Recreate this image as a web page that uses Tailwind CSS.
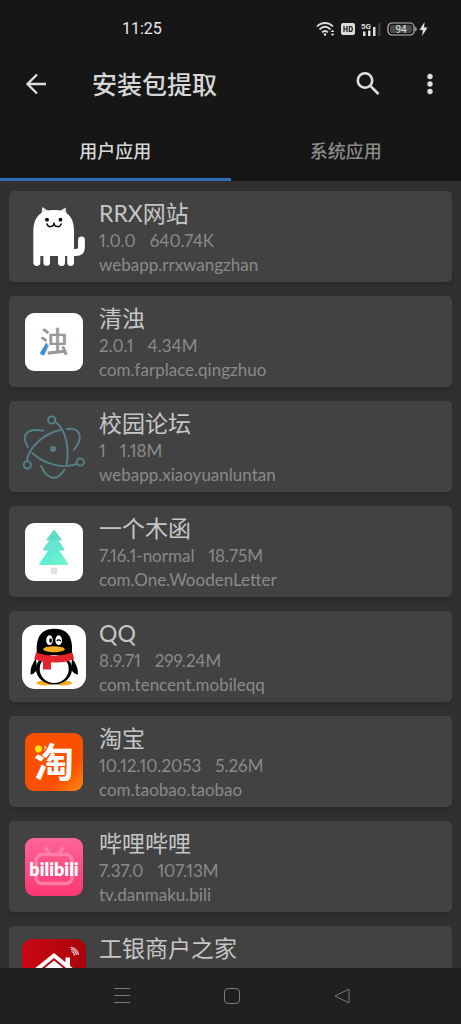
<!DOCTYPE html>
<html lang="zh-CN">
<head>
    <meta charset="UTF-8" />
    <meta name="viewport" content="width=device-width, initial-scale=1.0" />
    <title>安装包提取</title>
    <script src="https://cdn.jsdelivr.net/npm/@tailwindcss/browser@4"></script>
</head>
<body class="h-screen flex flex-col overflow-hidden bg-[#303030] font-['Lato','Noto_Sans_CJK_SC',sans-serif]">

    <header class="shrink-0 bg-[#161616] text-[#d6d6d6]">
        <!-- Status bar -->
        <div class="flex items-center justify-between h-14 pl-[122px] pr-[33px] pt-[2px]">
            <span class="font-['Roboto',sans-serif] text-base text-[#e8e8e8]">11:25</span>
            <div class="flex items-center gap-[6px]">
                <svg class="w-[19px] h-4" viewBox="0 0 19 16" fill="none" stroke="#dcdcdc" stroke-width="1.8">
                    <path d="M1 5.500 C5.500 0.800 12.500 0.800 17 5.500" />
                    <path d="M3.500 8.500 C7 5 11 5 14.500 8.500" />
                    <path d="M6 11.300 C8 9.500 10 9.500 12 11.300" />
                    <circle cx="9" cy="13.500" r="1.300" fill="#dcdcdc" stroke="none" />
                    <path d="M14.500 11 L16.500 8.800 L18.500 11 Z M14.500 12.800 L16.500 15 L18.500 12.800 Z" fill="#dcdcdc" stroke="none" />
                </svg>
                <svg class="w-[14px] h-3" viewBox="0 0 14 12">
                    <rect width="14" height="12" rx="2" fill="#dcdcdc" />
                    <path d="M3 3 V9 M6 3 V9 M3 6 H6 M8.300 3.500 V8.500 H9.500 Q11.300 8.500 11.300 6 Q11.300 3.500 9.500 3.500 Z" fill="none" stroke="#161616" stroke-width="1.200" />
                </svg>
                <svg class="w-5 h-4" viewBox="0 0 20 16" fill="#dcdcdc">
                    <text x="0" y="8" font-family="Roboto" font-size="8" font-weight="700">5G</text>
                    <rect x="2" y="10.500" width="2.500" height="4.500" />
                    <rect x="7" y="9.500" width="2.500" height="5.500" />
                    <rect x="12" y="6" width="2.500" height="9" />
                    <rect x="17" y="2" width="2.500" height="13" fill="#3a3a3a" />
                </svg>
                <svg class="w-[30px] h-[14px]" viewBox="0 0 30 14">
                    <rect x="1" y="1" width="26" height="12" rx="4" fill="#161616" stroke="#bdbdbd" stroke-width="1.200" />
                    <rect x="3" y="3" width="22" height="8" rx="2" fill="#484848" />
                    <path d="M28.500 5 Q29.500 7 28.500 9" fill="none" stroke="#bdbdbd" stroke-width="1.200" />
                    <text x="14" y="10.500" text-anchor="middle" font-family="Roboto" font-size="10" fill="#e0e0e0">94</text>
                </svg>
                <svg class="w-[9px] h-[14px] -ml-1" viewBox="0 0 8 14" fill="#e0e0e0">
                    <path d="M5 0 L0 8 H3.300 L2.700 14 L8 5.500 H4.600 Z" />
                </svg>
            </div>
        </div>

        <!-- App bar -->
        <div class="flex items-center h-14 pl-6 pr-[19px]">
            <button class="w-6 h-6" aria-label="返回">
                <svg viewBox="0 0 24 24" fill="none" stroke="#dedede" stroke-width="2.300">
                    <path d="M22 12 H3.500 M13 2.500 L3.500 12 L13 21.500" />
                </svg>
            </button>
            <h1 class="flex-1 pl-11 text-[25px] font-medium leading-8">安装包提取</h1>
            <button class="w-6 h-6 mr-[38px]" aria-label="搜索">
                <svg viewBox="0 0 24 24" fill="none" stroke="#dedede" stroke-width="2.600">
                    <circle cx="9" cy="8.500" r="7.200" />
                    <path d="M14.300 13.800 L22.500 22" />
                </svg>
            </button>
            <button class="w-6 h-6" aria-label="更多">
                <svg viewBox="0 0 24 24" fill="#dedede">
                    <circle cx="12" cy="4.500" r="2.700" />
                    <circle cx="12" cy="12" r="2.700" />
                    <circle cx="12" cy="19.500" r="2.700" />
                </svg>
            </button>
        </div>

        <!-- Tabs -->
        <nav class="grid grid-cols-2 pt-3 text-lg font-medium">
            <button class="h-[57px] border-b-3 border-[#2f6db4]">用户应用</button>
            <button class="h-[57px] border-b-3 border-transparent text-[#8a8a8a]">系统应用</button>
        </nav>
    </header>

    <!-- App list -->
    <main class="flex-1 min-h-0 overflow-hidden px-[9px] pt-[10px]">
        <ul class="flex flex-col gap-[14px] text-[17px] leading-6 text-[#8a8a8a] proportional-nums">
            <li class="flex items-center h-[91px] shrink-0 pl-[13px] gap-[13px] rounded-[5px] bg-[#424242] shadow-md">
                <svg class="w-16 h-16 shrink-0" viewBox="0 0 64 64">
                    <path d="M19 12 L20.300 2 L28 7 Z M45 12 L43.500 2.500 L36 7 Z" fill="#f0dfdf" />
                    <path d="M11.300 25 Q12 5 32 5 Q51.500 5 52 25 V57.500 A3.400 3.400 0 0 1 45.200 57.500 V51 H43 V57.500 A3.500 3.500 0 0 1 36 57.500 V51 H28 V57.500 A3.300 3.300 0 0 1 21.400 57.500 V51 H18.300 V57.500 A3.500 3.500 0 0 1 11.300 57.500 Z" fill="#fff" />
                    <path d="M51 47.500 H54 Q59.500 47.500 59.500 42 V35" fill="none" stroke="#fff" stroke-width="6.800" stroke-linecap="round" />
                    <circle cx="25" cy="14.700" r="1.900" />
                    <circle cx="38.500" cy="14.700" r="1.900" />
                    <path d="M25 19 Q26 22 28.500 21.600 Q32 21.300 32 17.500 Q32 21.300 35.500 21.600 Q38 22 39.200 19" fill="none" stroke="#111" stroke-width="1.500" stroke-linecap="round" />
                </svg>
                <div class="pt-px">
                    <h2 class="text-[23px] leading-8 text-[#c6c6c6]">RRX网站</h2>
                    <p class="flex gap-[14px]"><span>1.0.0</span><span>640.74K</span></p>
                    <p>webapp.rrxwangzhan</p>
                </div>
            </li>

            <li class="flex items-center h-[91px] shrink-0 pl-[13px] gap-[13px] rounded-[5px] bg-[#424242] shadow-md">
                <svg class="w-16 h-16 shrink-0" viewBox="0 0 64 64">
                    <rect x="3" y="3" width="58" height="58" rx="9" fill="#fff" />
                    <text x="32" y="43" text-anchor="middle" font-family="Noto Sans CJK SC" font-size="29" font-weight="500" fill="#999">浊</text>
                    <path d="M24.500 32 L18 43 Q19 46 22 45 L25.500 36 Z" fill="#3a90d8" />
                </svg>
                <div class="pt-px">
                    <h2 class="text-[23px] leading-8 text-[#c6c6c6]">清浊</h2>
                    <p class="flex gap-[14px]"><span>2.0.1</span><span>4.34M</span></p>
                    <p>com.farplace.qingzhuo</p>
                </div>
            </li>

            <li class="flex items-center h-[91px] shrink-0 pl-[13px] gap-[13px] rounded-[5px] bg-[#424242] shadow-md">
                <svg class="w-16 h-16 shrink-0" viewBox="0 0 64 64" fill="none" stroke="#568088" stroke-width="1.900" stroke-linecap="round">
                    <path d="M33 6.500 C42 13 48 29 44.700 49" />
                    <path d="M5 46 C6 34 20 19 38 15" />
                    <path d="M10.300 38 C20 47 38 55 55 49" />
                    <path d="M21.500 15.700 C6 13 -2 19 6 32" />
                    <path d="M45 14 C60 12 61 24 52 35" />
                    <path d="M19 51 C26 66 36 66 42.500 54.500" />
                    <circle cx="29.700" cy="5" r="3.600" />
                    <circle cx="5.300" cy="50" r="3.600" />
                    <circle cx="58.300" cy="47" r="3.600" />
                    <circle cx="31" cy="34" r="3" fill="#568088" stroke="none" />
                </svg>
                <div class="pt-px">
                    <h2 class="text-[23px] leading-8 text-[#c6c6c6]">校园论坛</h2>
                    <p class="flex gap-[14px]"><span>1</span><span>1.18M</span></p>
                    <p>webapp.xiaoyuanluntan</p>
                </div>
            </li>

            <li class="flex items-center h-[91px] shrink-0 pl-[13px] gap-[13px] rounded-[5px] bg-[#424242] shadow-md">
                <svg class="w-16 h-16 shrink-0" viewBox="0 0 64 64">
                    <defs>
                        <linearGradient id="leaf" x1="0" y1="0" x2="1" y2="1">
                            <stop offset="0" stop-color="#3fe6e0" />
                            <stop offset="1" stop-color="#7df5c4" />
                        </linearGradient>
                    </defs>
                    <rect x="3" y="3" width="58" height="58" rx="9" fill="#fff" />
                    <rect x="28.700" y="47.700" width="6.500" height="6.500" rx="1" fill="#e4e0de" />
                    <path d="M31 24 L17.300 43.500 Q17 45 18.500 45 H45 Q46.500 45 46 43.500 L33 24 Z" fill="url(#leaf)" />
                    <path d="M31 15 L21 29 Q21 30.500 22 30.500 H41.500 Q43 30.500 42.300 29 L33 15 Z" fill="#67e6cf" />
                    <path d="M31.200 10.500 L24.500 19.500 Q24.500 20.500 25.500 20.500 H39 Q40 20.500 39.600 19.500 L33 10.500 Q32 9.500 31.200 10.500 Z" fill="#5fdcc2" />
                </svg>
                <div class="pt-px">
                    <h2 class="text-[23px] leading-8 text-[#c6c6c6]">一个木函</h2>
                    <p class="flex gap-[14px]"><span>7.16.1-normal</span><span>18.75M</span></p>
                    <p>com.One.WoodenLetter</p>
                </div>
            </li>

            <li class="flex items-center h-[91px] shrink-0 pl-[13px] gap-[13px] rounded-[5px] bg-[#424242] shadow-md">
                <svg class="w-16 h-16 shrink-0" viewBox="0 0 64 64">
                    <rect width="64" height="64" rx="13" fill="#fff" />
                    <ellipse cx="23" cy="58" rx="8.500" ry="2.600" fill="#f5ae22" />
                    <ellipse cx="41.500" cy="58" rx="8.500" ry="2.600" fill="#f5ae22" />
                    <path d="M14 33 Q8 42 8.500 49 Q9.500 51 15 45 Z M50 33 Q56.500 42 56 49 Q55 51 49 45 Z" />
                    <ellipse cx="32" cy="44" rx="18" ry="15.500" />
                    <path d="M14.700 30 V21 Q16 3.700 32.300 3.700 Q49 3.700 50 21 V30 Z" />
                    <ellipse cx="32.200" cy="44" rx="14.500" ry="14" fill="#fff" />
                    <path d="M14 27.500 Q32 34 50.500 27.500 L52 34 Q42 38.500 29 37.300 V44.500 H21 V36.500 Q16 35.500 12.300 34 Z" fill="#e5232a" />
                    <ellipse cx="27.500" cy="15.200" rx="3.300" ry="4.900" fill="#fff" />
                    <ellipse cx="36.700" cy="15.200" rx="3.300" ry="4.900" fill="#fff" />
                    <ellipse cx="28.600" cy="15.500" rx="1.300" ry="2.200" />
                    <path d="M34.800 16 Q36.500 13.800 38.800 16" fill="none" stroke="#000" stroke-width="1.200" />
                    <ellipse cx="32" cy="24.200" rx="10.800" ry="3" fill="#f5ae22" />
                </svg>
                <div class="pt-px">
                    <h2 class="text-[23px] leading-8 text-[#c6c6c6]">QQ</h2>
                    <p class="flex gap-[14px]"><span>8.9.71</span><span>299.24M</span></p>
                    <p>com.tencent.mobileqq</p>
                </div>
            </li>

            <li class="flex items-center h-[91px] shrink-0 pl-[13px] gap-[13px] rounded-[5px] bg-[#424242] shadow-md">
                <svg class="w-16 h-16 shrink-0" viewBox="0 0 64 64">
                    <defs>
                        <linearGradient id="orange" x1="0" y1="0" x2="1" y2="1">
                            <stop offset="0.700" stop-color="#fb5000" />
                            <stop offset="1" stop-color="#ff8a10" />
                        </linearGradient>
                    </defs>
                    <rect x="3" y="3" width="58" height="58" rx="9" fill="url(#orange)" />
                    <text x="32" y="47" text-anchor="middle" font-family="Noto Sans CJK SC" font-size="40" font-weight="700" fill="#fff">淘</text>
                    <path d="M11 11 H20.500 L23 18 L20 24 L11 22 Z" fill="#fb5000" />
                    <circle cx="16.500" cy="19" r="3.400" fill="#ffe600" />
                </svg>
                <div class="pt-px">
                    <h2 class="text-[23px] leading-8 text-[#c6c6c6]">淘宝</h2>
                    <p class="flex gap-[14px]"><span>10.12.10.2053</span><span>5.26M</span></p>
                    <p>com.taobao.taobao</p>
                </div>
            </li>

            <li class="flex items-center h-[91px] shrink-0 pl-[13px] gap-[13px] rounded-[5px] bg-[#424242] shadow-md">
                <svg class="w-16 h-16 shrink-0" viewBox="0 0 64 64">
                    <defs>
                        <linearGradient id="pink" x1="0" y1="0" x2="0" y2="1">
                            <stop offset="0" stop-color="#fd6598" />
                            <stop offset="1" stop-color="#fb3772" />
                        </linearGradient>
                    </defs>
                    <rect x="3" y="3" width="58" height="58" rx="9" fill="url(#pink)" />
                    <g fill="none" stroke="#ff7ca6" stroke-width="3.500" stroke-linecap="round">
                        <rect x="14" y="19.500" width="36" height="29" rx="6" />
                        <path d="M24 13.500 L27 18 M40.500 13.500 L37.500 18" />
                    </g>
                    <text x="32" y="41" text-anchor="middle" font-family="Lato" font-size="18" font-weight="800" fill="#fff">bilibili</text>
                </svg>
                <div class="pt-px">
                    <h2 class="text-[23px] leading-8 text-[#c6c6c6]">哔哩哔哩</h2>
                    <p class="flex gap-[14px]"><span>7.37.0</span><span>107.13M</span></p>
                    <p>tv.danmaku.bili</p>
                </div>
            </li>

            <li class="flex items-start h-[91px] shrink-0 pl-[13px] gap-[13px] rounded-[5px] bg-[#424242] shadow-md">
                <svg class="w-16 h-16 shrink-0 mt-[13px]" viewBox="0 0 64 64">
                    <defs>
                        <linearGradient id="red" x1="0" y1="0" x2="1" y2="0">
                            <stop offset="0" stop-color="#cb0714" />
                            <stop offset="1" stop-color="#a8040c" />
                        </linearGradient>
                    </defs>
                    <rect width="64" height="64" rx="10" fill="url(#red)" />
                    <path d="M12 30 L32 14 L52 30 V33 H49 L32 19 L15 33 H12 Z M43.500 18.500 H48 V28 L43.500 24 Z" fill="#fff" />
                    <path d="M18 33 L32 21.500 L46 33 V52 H18 Z" fill="#fff" />
                    <g fill="none" stroke="#f3caca" stroke-width="1.200">
                        <path d="M49.500 12.500 A4 4 0 0 1 52.500 16.500 M49 10.300 A6.500 6.500 0 0 1 54.500 16 M48.500 8.300 A8.500 8.500 0 0 1 56.500 16" />
                    </g>
                </svg>
                <div class="pt-[6px]">
                    <h2 class="text-[23px] leading-8 text-[#c6c6c6]">工银商户之家</h2>
                </div>
            </li>
        </ul>
    </main>

    <!-- System navigation -->
    <footer class="shrink-0 flex items-center justify-center gap-[94px] h-14 pl-[3px] bg-[#202020]">
        <button class="w-4 h-4" aria-label="菜单">
            <svg viewBox="0 0 16 16" fill="none" stroke="#7a7a7a"><path d="M0 0.500 H16 M0 7.500 H16 M0 14.500 H16" /></svg>
        </button>
        <button class="w-4 h-4" aria-label="主页">
            <svg viewBox="0 0 16 16" fill="none" stroke="#7a7a7a"><rect x="0.500" y="0.500" width="15" height="15" rx="3.500" /></svg>
        </button>
        <button class="w-4 h-4" aria-label="后退">
            <svg viewBox="0 0 16 16" fill="none" stroke="#7a7a7a" stroke-linejoin="round"><path d="M15 1 V15 L1 8 Z" /></svg>
        </button>
    </footer>
</body>
</html>
